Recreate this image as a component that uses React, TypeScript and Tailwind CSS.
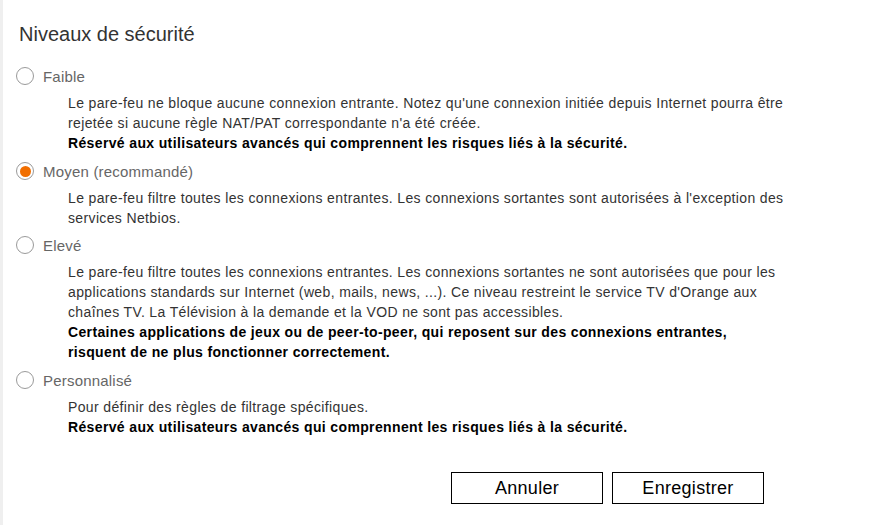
import React, { useState } from "react";

type Line = { text: string; bold?: boolean };
type Level = { id: string; label: string; gap: string; lines: Line[] };

const warning = "Réservé aux utilisateurs avancés qui comprennent les risques liés à la sécurité.";

const levels: Level[] = [
  {
    id: "faible",
    label: "Faible",
    gap: "",
    lines: [
      { text: "Le pare-feu ne bloque aucune connexion entrante. Notez qu'une connexion initiée depuis Internet pourra être" },
      { text: "rejetée si aucune règle NAT/PAT correspondante n'a été créée." },
      { text: warning, bold: true },
    ],
  },
  {
    id: "moyen",
    label: "Moyen (recommandé)",
    gap: "mt-[8px]",
    lines: [
      { text: "Le pare-feu filtre toutes les connexions entrantes. Les connexions sortantes sont autorisées à l'exception des" },
      { text: "services Netbios." },
    ],
  },
  {
    id: "eleve",
    label: "Elevé",
    gap: "mt-[7px]",
    lines: [
      { text: "Le pare-feu filtre toutes les connexions entrantes. Les connexions sortantes ne sont autorisées que pour les" },
      { text: "applications standards sur Internet (web, mails, news, ...). Ce niveau restreint le service TV d'Orange aux" },
      { text: "chaînes TV. La Télévision à la demande et la VOD ne sont pas accessibles." },
      { text: "Certaines applications de jeux ou de peer-to-peer, qui reposent sur des connexions entrantes,", bold: true },
      { text: "risquent de ne plus fonctionner correctement.", bold: true },
    ],
  },
  {
    id: "perso",
    label: "Personnalisé",
    gap: "mt-[8px]",
    lines: [
      { text: "Pour définir des règles de filtrage spécifiques." },
      { text: warning, bold: true },
    ],
  },
];

const Radio = ({ checked }: { checked: boolean }) => (
  <span className="w-[18px] h-[18px] rounded-full border border-[#9a9a9a] bg-white flex items-center justify-center shrink-0">
    {checked && <span className="w-[11px] h-[11px] rounded-full bg-[#f16e00]" />}
  </span>
);

const App = () => {
  const [level, setLevel] = useState("moyen");

  return (
    <div className="min-h-screen bg-white border-l-[3px] border-[#efefef] font-['Liberation_Sans',Arial,sans-serif]">
      <div className="w-[761px] pt-[22px] pb-[20px]">
        <h1 className="pl-[16px] text-[20px] leading-[24px] text-[#333]">Niveaux de sécurité</h1>
        <div className="mt-[20px] flex flex-col">
          {levels.map((lv) => (
            <div key={lv.id} className={lv.gap}>
              <div
                className="flex items-center h-[20px] pl-[13px] gap-[9px] cursor-pointer"
                onClick={() => setLevel(lv.id)}
              >
                <Radio checked={level === lv.id} />
                <span className="pt-[2px] text-[15px] leading-[20px] tracking-[0.2px] text-[#666]">{lv.label}</span>
              </div>
              <div className="pl-[65px] mt-[7px] text-[14px] leading-[20px] tracking-[0.36px] text-[#333]">
                {lv.lines.map((l, i) => (
                  <p key={i} className={`whitespace-nowrap ${l.bold ? "font-bold text-black" : ""}`}>
                    {l.text}
                  </p>
                ))}
              </div>
            </div>
          ))}
        </div>
        <div className="flex justify-end gap-[9px] mt-[35px]">
          <button className="w-[152px] h-[32px] border border-black bg-white text-[18px] tracking-[0.3px] text-black">
            Annuler
          </button>
          <button className="w-[152px] h-[32px] border border-black bg-white text-[18px] tracking-[0.3px] text-black">
            Enregistrer
          </button>
        </div>
      </div>
    </div>
  );
};

export default App;
